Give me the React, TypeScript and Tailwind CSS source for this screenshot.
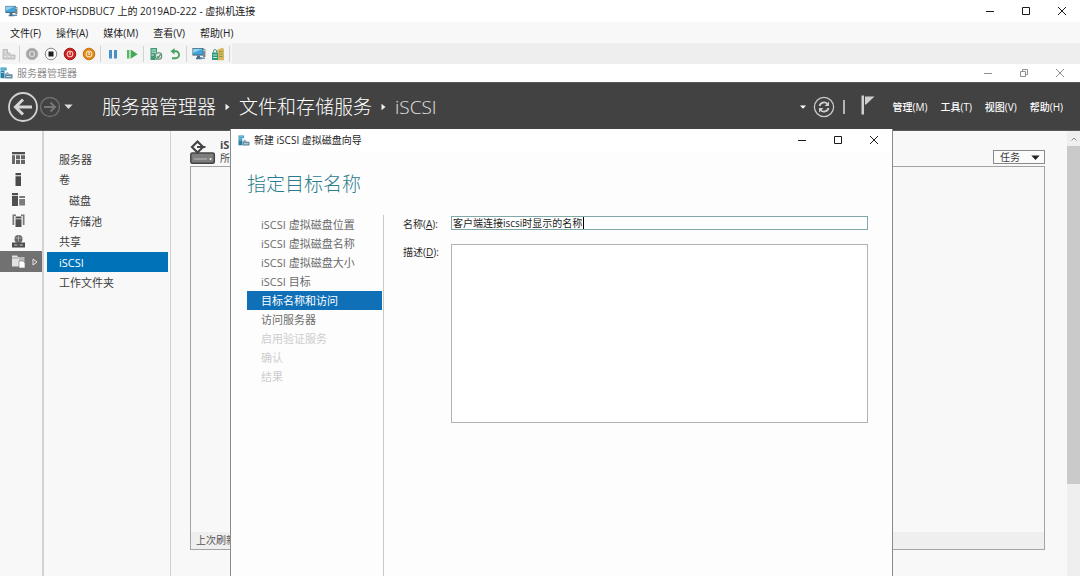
import React, { useState } from "react";

type IconProps = { className?: string };

type NavItem = {
  label: string;
  nested?: boolean;
};

type Step = {
  label: string;
  done: boolean;
};

const navItems: NavItem[] = [
  { label: "服务器" },
  { label: "卷" },
  { label: "磁盘", nested: true },
  { label: "存储池", nested: true },
  { label: "共享" },
  { label: "iSCSI" },
  { label: "工作文件夹" },
];

const steps: Step[] = [
  { label: "iSCSI 虚拟磁盘位置", done: true },
  { label: "iSCSI 虚拟磁盘名称", done: true },
  { label: "iSCSI 虚拟磁盘大小", done: true },
  { label: "iSCSI 目标", done: true },
  { label: "目标名称和访问", done: true },
  { label: "访问服务器", done: true },
  { label: "启用验证服务", done: false },
  { label: "确认", done: false },
  { label: "结果", done: false },
];

const vmMenus = ["文件(F)", "操作(A)", "媒体(M)", "查看(V)", "帮助(H)"];
const managerMenus = ["管理(M)", "工具(T)", "视图(V)", "帮助(H)"];

/* ---------- icons ---------- */

function MonitorIcon({ className }: IconProps) {
  return (
    <svg viewBox="0 0 14 14" className={className} aria-hidden="true">
      <rect x="0.5" y="1" width="11" height="7.5" fill="#3d4f5c" />
      <rect x="1.2" y="1.7" width="9.6" height="6" fill="#3fa4dc" />
      <path d="M1.2 1.7h9.6L1.2 6z" fill="#8fd3f4" />
      <path d="M5 8.5h3v2h2v1.7H4v-1.7h1z" fill="#4c6f86" />
      <rect x="11" y="2" width="2.4" height="8" fill="#7a868e" />
      <rect x="11.4" y="3" width="1.6" height="1" fill="#d4e9c9" />
      <path d="M8 10.5h5v1.3H8z" fill="#4c8bb0" />
    </svg>
  );
}

function ServerManagerIcon({ className }: IconProps) {
  return (
    <svg viewBox="0 0 13 12" className={className} aria-hidden="true">
      <rect x="0.5" y="0.5" width="6" height="3" fill="#2793bd" />
      <rect x="0.5" y="3.8" width="4" height="7.4" fill="#2580a8" />
      <path d="M1.2 2h4.5M1.2 5.5h2.5" stroke="#c5e7f3" strokeWidth="0.8" />
      <path d="M4.5 7l3-2 2 2h3v4.5h-8z" fill="#8fa9b8" />
      <rect x="5.2" y="8" width="7" height="3.2" fill="#5d87a0" />
      <path d="M6.2 9.6h5" stroke="#e5f0f5" strokeWidth="0.9" />
    </svg>
  );
}

function CtrlAltDelIcon() {
  return (
    <svg viewBox="0 0 14 14" className="size-3.5" aria-hidden="true">
      <path d="M1 2.5h4.5V6H8v2h5v4H1z" fill="#cfcfcf" stroke="#b3b3b3" strokeWidth="0.8" />
      <path d="M2.5 5h1.5M2.5 9.5h2M6.5 9.5h1.5M10 10h1.5" stroke="#efefef" />
    </svg>
  );
}

function RoundIcon({ fill, ring, children }: { fill: string; ring: string; children: React.ReactNode }) {
  return (
    <svg viewBox="0 0 14 14" className="size-3.5" aria-hidden="true">
      <circle cx="7" cy="7" r="5.8" fill={fill} stroke={ring} strokeWidth="1" />
      {children}
    </svg>
  );
}

function PauseIcon() {
  return (
    <svg viewBox="0 0 14 14" className="size-3.5" aria-hidden="true">
      <rect x="3" y="3" width="3" height="8.5" fill="#4a90c8" />
      <rect x="8" y="3" width="3" height="8.5" fill="#4a90c8" />
    </svg>
  );
}

function ResumeIcon() {
  return (
    <svg viewBox="0 0 14 14" className="size-3.5" aria-hidden="true">
      <rect x="2" y="3" width="2.4" height="8.5" fill="#56b567" />
      <path d="M5.6 2.6L12.6 7.2 5.6 11.8z" fill="#3fa953" />
    </svg>
  );
}

function CheckpointIcon() {
  return (
    <svg viewBox="0 0 14 14" className="size-3.5" aria-hidden="true">
      <rect x="1.5" y="1" width="6.5" height="12" fill="#3f9a78" />
      <path d="M2.5 3h4.5M2.5 5.2h4.5M2.5 8h2.5" stroke="#d9f0e4" />
      <path d="M6 5.5h7v7H6z" fill="#c6d6cd" />
      <circle cx="9.5" cy="9" r="3.2" fill="#dfe9e3" stroke="#5c8a75" strokeWidth="1.1" />
      <path d="M8 9.5l1.3 1.3L11.6 7.5" fill="none" stroke="#3c8e62" strokeWidth="1.2" />
    </svg>
  );
}

function RevertIcon() {
  return (
    <svg viewBox="0 0 14 14" className="size-3.5" aria-hidden="true">
      <path d="M4.5 4.3h3.1a3.4 3.4 0 010 6.9H4" fill="none" stroke="#43a35a" strokeWidth="1.9" />
      <path d="M6.5 1v6.4L2.6 4.2z" fill="#43a35a" />
    </svg>
  );
}

function ShareIcon() {
  return (
    <svg viewBox="0 0 14 14" className="size-3.5" aria-hidden="true">
      <path d="M6 3l5-2.2 2 1v11.4H6z" fill="#d9b75e" />
      <path d="M8 4.5h3.5M8 7h3.5M8 9.5h3.5" stroke="#7d9c50" />
      <rect x="1" y="5.5" width="6" height="7.5" fill="#35977b" />
      <path d="M2.5 5.5V4a1.5 1.5 0 013 0v1.5" fill="none" stroke="#4c9f86" />
      <path d="M2 8h4M2 10.5h4" stroke="#cfeee3" strokeWidth="0.9" />
    </svg>
  );
}

function BackIcon() {
  return (
    <svg viewBox="0 0 32 32" className="size-8" aria-hidden="true">
      <circle cx="16" cy="16" r="14" fill="none" stroke="#d2d2d2" strokeWidth="1.8" />
      <path d="M25 16H9M16 8.5L8.5 16l7.5 7.5" fill="none" stroke="#d6d6d6" strokeWidth="3" />
    </svg>
  );
}

function ForwardIcon() {
  return (
    <svg viewBox="0 0 22 22" className="size-[22px]" aria-hidden="true">
      <circle cx="11" cy="11" r="9.5" fill="none" stroke="#6f6f6f" strokeWidth="1.4" />
      <path d="M5 11h11M11.5 6.5L16 11l-4.5 4.5" fill="none" stroke="#777777" strokeWidth="2" />
    </svg>
  );
}

function DownTriangle({ className }: IconProps) {
  return (
    <svg viewBox="0 0 10 6" className={className} aria-hidden="true">
      <path d="M0 0.5h10L5 6z" fill="currentColor" />
    </svg>
  );
}

function RightTriangle() {
  return (
    <svg viewBox="0 0 5 8" className="h-2 w-[5px]" aria-hidden="true">
      <path d="M0.5 0.8L4.5 4 0.5 7.2z" fill="#f0f0f0" />
    </svg>
  );
}

function RefreshIcon() {
  return (
    <svg viewBox="0 0 22 22" className="size-[22px]" aria-hidden="true">
      <circle cx="11" cy="11" r="9.6" fill="none" stroke="#c9c9c9" strokeWidth="1.3" />
      <path
        d="M6.5 10a4.6 4.6 0 018-2M15.5 12a4.6 4.6 0 01-8 2"
        fill="none"
        stroke="#d0d0d0"
        strokeWidth="1.8"
      />
      <path d="M16 5.5v4.4h-4.4zM6 16.5v-4.4h4.4z" fill="#d0d0d0" />
    </svg>
  );
}

function FlagIcon() {
  return (
    <svg viewBox="0 0 14 20" className="h-5 w-3.5" aria-hidden="true">
      <rect x="0.5" y="0.5" width="2.5" height="19" fill="#cfcfcf" />
      <path d="M4 1.5H13.5L5 9.5H4z" fill="#cfcfcf" />
    </svg>
  );
}

function DiskIcon() {
  return (
    <svg viewBox="0 0 26 26" className="size-[26px]" aria-hidden="true">
      <rect x="0.8" y="14" width="23.5" height="10.2" rx="1.5" fill="#7d7d7d" stroke="#444444" strokeWidth="1.5" />
      <path d="M4 20h13" stroke="#a8a8a8" strokeWidth="1.5" />
      <circle cx="20.5" cy="20" r="1.1" fill="#ececec" />
      <path d="M7.5 2.5l5.5 5.5-5.500 5.500L2 8z" fill="#f8f8f8" stroke="#444444" strokeWidth="2.2" />
      <path d="M7 8h3" stroke="#f8f8f8" strokeWidth="4" />
      <path d="M7 8h8.500" stroke="#444444" strokeWidth="2" />
    </svg>
  );
}

/* left rail, one drawing per management page */
const railIcons: { name: string; art: React.ReactNode }[] = [
  {
    name: "仪表板",
    art: (
      <g fill="#4f4f4f">
        <path d="M1 1h13v2.3H1z" />
        <path d="M1 4.2h3V13H1z" fill="#6a6a6a" />
        <path d="M5 4.2h4v4H5zM10 4.2h4v4h-4zM5 9h4v4H5zM10 9h4v4h-4z" fill="#666666" />
      </g>
    ),
  },
  {
    name: "本地服务器",
    art: (
      <g fill="#4a4a4a">
        <path d="M4.5 1h5.5v2.2H4.5zM4.5 4.2H10V14H4.5z" />
      </g>
    ),
  },
  {
    name: "所有服务器",
    art: (
      <g fill="#505050">
        <path d="M1 1h6v2H1zM1 3.8h6V14H1z" />
        <path d="M8.2 4H14v2H8.2zM8.2 7H14v6.5H8.2z" fill="#7a7a7a" />
      </g>
    ),
  },
  {
    name: "AD DS",
    art: (
      <g fill="#505050">
        <path d="M4.5 3.5h6v2h-6zM4.5 6.2h6V14h-6z" />
        <path d="M1.5 1.5H5v1.4H3.2V12H1.5zM10 1.5h3.500V12h-1.700V2.9H10z" fill="#777777" />
      </g>
    ),
  },
  {
    name: "DNS",
    art: (
      <g>
        <circle cx="7.5" cy="5" r="4" fill="#666666" />
        <path d="M4.5 4h6M7.5 1.5v6" stroke="#bdbdbd" strokeWidth="0.8" />
        <path d="M1 8.5h13v5H1z" fill="#4c4c4c" />
        <path d="M3 11h3.500M8.500 11H12" stroke="#c9c9c9" />
      </g>
    ),
  },
  {
    name: "文件和存储服务",
    art: (
      <g>
        <path d="M1 1.5h5l1 1.500h1.500v9.500H1z" fill="#e2e2e2" />
        <path d="M8 3h5.500v5H8z" fill="#b9b9b9" />
        <path d="M8 7h4l2 2v5H8z" fill="#ffffff" stroke="#707070" strokeWidth="0.6" />
        <path d="M1 4h6.500" stroke="#8a8a8a" strokeWidth="0.8" />
      </g>
    ),
  },
];

/* ---------- shared pieces ---------- */

function WindowControls({ restore, tone }: { restore?: boolean; tone: string }) {
  return (
    <div className={`flex shrink-0 ${tone}`}>
      <button type="button" aria-label="最小化" className="flex w-9 items-center justify-center">
        <svg viewBox="0 0 10 10" className="size-2.5" aria-hidden="true">
          <path d="M1 5.5h8" stroke="currentColor" />
        </svg>
      </button>
      <button type="button" aria-label="最大化" className="flex w-9 items-center justify-center">
        <svg viewBox="0 0 10 10" className="size-2.5" fill="none" stroke="currentColor" aria-hidden="true">
          {restore ? (
            <path d="M1.5 3.5h5v5h-5zM3.5 3.5v-2h5v5h-2" />
          ) : (
            <path d="M1.5 1.5h7v7h-7z" />
          )}
        </svg>
      </button>
      <button type="button" aria-label="关闭" className="flex w-9 items-center justify-center">
        <svg viewBox="0 0 10 10" className="size-2.5" aria-hidden="true">
          <path d="M1 1l8 8M9 1L1 9" stroke="currentColor" />
        </svg>
      </button>
    </div>
  );
}

function ToolButton({ label, children }: { label: string; children: React.ReactNode }) {
  return (
    <button type="button" aria-label={label} className="flex w-[19px] items-center justify-center">
      {children}
    </button>
  );
}

function Divider() {
  return <span className="mx-0.5 h-4 w-px bg-[#d2d2d2]"></span>;
}

function VmToolbar() {
  return (
    <div className="flex h-[21px] shrink-0 bg-[#eeeeee]">
      <div className="flex items-center bg-[#f5f5f5]">
        <button type="button" aria-label="Ctrl+Alt+Del" className="flex w-[17px] items-center justify-center">
          <CtrlAltDelIcon />
        </button>
        <Divider />
        <ToolButton label="启动">
          <RoundIcon fill="#a5a5a5" ring="#b9b9b9">
            <circle cx="7" cy="7" r="2.5" fill="none" stroke="#dcdcdc" strokeWidth="1.2" />
          </RoundIcon>
        </ToolButton>
        <ToolButton label="关闭电源">
          <RoundIcon fill="#fafafa" ring="#8a8a8a">
            <rect x="4.5" y="4.5" width="5" height="5" fill="#1d1d1d" />
          </RoundIcon>
        </ToolButton>
        <ToolButton label="关机">
          <RoundIcon fill="#cf2020" ring="#a51616">
            <circle cx="7" cy="7" r="2.8" fill="none" stroke="#f6c9c9" strokeWidth="1.1" />
            <path d="M7 5v3" stroke="#ffffff" />
          </RoundIcon>
        </ToolButton>
        <ToolButton label="保存">
          <RoundIcon fill="#e08a1a" ring="#c27512">
            <circle cx="7" cy="7" r="2.8" fill="none" stroke="#fbe3bd" strokeWidth="1.1" />
            <path d="M7 5v3" stroke="#ffffff" />
          </RoundIcon>
        </ToolButton>
        <Divider />
        <ToolButton label="暂停"><PauseIcon /></ToolButton>
        <ToolButton label="重置"><ResumeIcon /></ToolButton>
        <Divider />
        <ToolButton label="检查点"><CheckpointIcon /></ToolButton>
        <ToolButton label="还原"><RevertIcon /></ToolButton>
        <Divider />
        <ToolButton label="增强会话"><MonitorIcon className="size-3.5" /></ToolButton>
        <ToolButton label="共享"><ShareIcon /></ToolButton>
        <Divider />
      </div>
    </div>
  );
}

function ManagerHeader() {
  return (
    <header className="flex h-[49px] shrink-0 items-center border-y border-[#5a5a5a] bg-[#424242] pr-[17px] pl-[7px] text-white">
      <button type="button" aria-label="后退"><BackIcon /></button>
      <button type="button" aria-label="前进"><ForwardIcon /></button>
      <button type="button" aria-label="历史记录" className="ml-[3px] text-[#d8d8d8]">
        <DownTriangle className="h-[5px] w-[9px]" />
      </button>
      <nav className="ml-[29px] flex items-center gap-[9px] text-[19px] leading-6 font-light">
        <a href="#dashboard">服务器管理器</a>
        <RightTriangle />
        <a href="#storage">文件和存储服务</a>
        <RightTriangle />
        <a href="#iscsi" className="text-[#e2e2e2]">iSCSI</a>
      </nav>
      <div className="ml-auto flex items-center">
        <DownTriangle className="h-1 w-1.5" />
        <button type="button" aria-label="刷新" className="ml-[7px]"><RefreshIcon /></button>
        <span className="ml-2 h-3.5 w-0.5 bg-[#b5b5b5]"></span>
        <button type="button" aria-label="通知" className="ml-4 pb-1"><FlagIcon /></button>
        <div className="ml-[18px] flex gap-[13px] text-[10px] leading-4 font-medium">
          {managerMenus.map((item) => (
            <button key={item} type="button">{item}</button>
          ))}
        </div>
      </div>
    </header>
  );
}

function Rail() {
  return (
    <div className="w-11 shrink-0 border-r-2 border-[#d3d3d3] pt-[17px]">
      <div className="flex h-[124px] flex-col">
        {railIcons.map((icon, index) => {
          const active = index === railIcons.length - 1;
          return (
            <button
              key={icon.name}
              type="button"
              aria-label={icon.name}
              className={`flex w-full flex-1 items-center gap-1.5 pl-[11px] ${active ? "bg-[#717171]" : ""}`}
            >
              <svg viewBox="0 0 15 15" className="size-[15px]" aria-hidden="true">{icon.art}</svg>
              {active && (
                <svg viewBox="0 0 6 8" className="h-2 w-1.5" aria-hidden="true">
                  <path d="M1 1l4 3-4 3z" fill="none" stroke="#e8e8e8" />
                </svg>
              )}
            </button>
          );
        })}
      </div>
    </div>
  );
}

function SideNav() {
  const [active, setActive] = useState("iSCSI");

  return (
    <nav className="w-[127px] shrink-0 border-r border-[#cfcfcf] pt-[18px] pr-0.5 pl-[3px]">
      <div className="flex h-36 flex-col text-[11px] leading-4">
        {navItems.map((item) => (
          <button
            key={item.label}
            type="button"
            onClick={() => setActive(item.label)}
            className={`flex flex-1 items-center pt-px ${item.nested ? "pl-[22px]" : "pl-3"} ${
              active === item.label ? "bg-[#0072b8] text-white" : "text-[#3c3c3c]"
            }`}
          >
            {item.label}
          </button>
        ))}
      </div>
    </nav>
  );
}

function DiskPanel() {
  return (
    <section className="flex min-w-0 flex-1 flex-col pt-2 pr-[22px] pb-[26px] pl-[19px]">
      <div className="flex h-[27px] shrink-0 items-start">
        <DiskIcon />
        <div className="ml-1 text-[#4a4a4a]">
          <h2 className="text-[11px] leading-3 font-bold">iSCSI</h2>
          <p className="text-[10px] leading-[14px]">所有</p>
        </div>
        <button
          type="button"
          className="mt-[11px] ml-auto flex h-[14px] w-[52px] items-center justify-between border border-[#8a8a8a] bg-[#fbfbfb] pr-1 pl-1.5 text-[10px] leading-3 text-[#3a3a3a]"
        >
          任务
          <DownTriangle className="h-[5px] w-[9px] text-[#222222]" />
        </button>
      </div>
      <div className="flex flex-1 flex-col border border-[#a3a3a3]">
        <div className="flex-1"></div>
        <div className="bg-[#efefef] pl-[5px] text-[10px] leading-[17px] text-[#555555]">上次刷新</div>
      </div>
    </section>
  );
}

function WizardDialog() {
  const [name, setName] = useState("客户端连接iscsi时显示的名称");
  const [description, setDescription] = useState("");

  return (
    <div
      role="dialog"
      aria-label="新建 iSCSI 虚拟磁盘向导"
      className="absolute top-[-2px] right-[187px] bottom-0 left-[230px] flex flex-col border-x border-[#8a8a8a] bg-[#fdfdfd]"
    >
      <div className="flex h-[22px] shrink-0 bg-white">
        <div className="flex flex-1 items-center gap-1 pl-[7px] text-[10px] leading-4 text-[#1c1c1c]">
          <ServerManagerIcon className="h-[11px] w-3" />
          新建 iSCSI 虚拟磁盘向导
        </div>
        <WindowControls tone="text-[#1c1c1c]" />
      </div>
      <h1 className="mt-[21px] pl-4 text-[19px] leading-6 font-light text-[#2a7c8c]">指定目标名称</h1>
      <div className="mt-[19px] flex flex-1 pr-6 pl-4">
        <ol className="w-[137px] shrink-0 border-r border-[#c9c9c9] pr-px text-[11px]">
          {steps.map((step) => {
            const current = step.label === "目标名称和访问";
            return (
              <li
                key={step.label}
                aria-current={current ? "step" : undefined}
                className={`h-[19px] pl-[14px] leading-5 ${
                  current ? "bg-[#0f70b7] text-white" : step.done ? "text-[#6b6b6b]" : "text-[#cdcdcd]"
                }`}
              >
                {step.label}
              </li>
            );
          })}
        </ol>
        <form className="flex-1 pl-[19px] text-[10px] text-[#2c2c2c]">
          <div className="flex">
            <label htmlFor="target-name" className="w-12 shrink-0 leading-[18px]">
              名称(<u>A</u>):
            </label>
            <div className="relative mt-px h-[14px] flex-1">
              <input
                id="target-name"
                type="text"
                value={name}
                onChange={(e) => setName(e.target.value)}
                className="block h-full w-full border border-[#7fa9a8] bg-white px-px pb-px leading-3 text-[#1c1c1c] outline-none"
              />
              {/* text cursor */}
              <span className="absolute inset-y-px left-[132px] w-px bg-black"></span>
            </div>
          </div>
          <div className="mt-2.5 flex">
            <label htmlFor="target-description" className="w-12 shrink-0 leading-[18px]">
              描述(<u>D</u>):
            </label>
            <textarea
              id="target-description"
              value={description}
              onChange={(e) => setDescription(e.target.value)}
              className="mt-px block h-[179px] flex-1 resize-none border border-[#b2b2b2] bg-white p-0.5 outline-none"
            />
          </div>
        </form>
      </div>
    </div>
  );
}

function ScrollBar() {
  return (
    <div className="flex w-[13px] shrink-0 flex-col bg-[#efefef]">
      <button type="button" aria-label="向上滚动" className="flex h-[15px] items-center justify-center">
        <svg viewBox="0 0 6 4" className="h-1 w-1.5" aria-hidden="true">
          <path d="M0.5 3.5L3 1l2.5 2.5" fill="none" stroke="#8c8c8c" />
        </svg>
      </button>
      <div className="h-[76%] bg-[#cacaca]"></div>
    </div>
  );
}

export default function App() {
  return (
    <main className="flex h-screen flex-col overflow-hidden bg-[#f8f8f8] font-['Open_Sans','Noto_Sans_CJK_SC',sans-serif]">
      <div className="flex h-[22px] shrink-0 bg-white">
        <div className="flex flex-1 items-center gap-1 pl-[5px] text-[10px] leading-4 text-[#1c1c1c]">
          <MonitorIcon className="size-[13px]" />
          DESKTOP-HSDBUC7 上的 2019AD-222 - 虚拟机连接
        </div>
        <WindowControls tone="text-[#1c1c1c]" />
      </div>

      <div className="flex h-[21px] shrink-0 items-center gap-[15px] bg-[#f8f8f8] pl-[10px] text-[10px] leading-4 text-[#222222]">
        {vmMenus.map((item) => (
          <button key={item} type="button">{item}</button>
        ))}
      </div>
      <VmToolbar />

      <div className="flex h-[18px] shrink-0 bg-white pr-0.5">
        <div className="flex flex-1 items-center gap-1 text-[10px] leading-4 text-[#8f8f8f]">
          <ServerManagerIcon className="h-3 w-[13px]" />
          服务器管理器
        </div>
        <WindowControls restore tone="text-[#8f8f8f]" />
      </div>

      <ManagerHeader />

      <div className="relative flex min-h-0 flex-1">
        <Rail />
        <SideNav />
        <DiskPanel />
        <ScrollBar />
        <WizardDialog />
      </div>
    </main>
  );
}
